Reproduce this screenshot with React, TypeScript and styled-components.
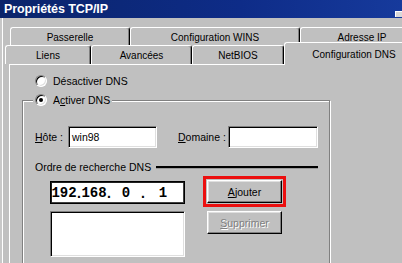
import React from "react";
import styled, { createGlobalStyle } from "styled-components";

const Global = createGlobalStyle`
  html, body { margin: 0; padding: 0; background: #c0c0c0; }
  body {
    font-family: "Liberation Sans", Arial, sans-serif;
    font-size: 10.5px;
    color: #000;
  }
`;

const Window = styled.div`
  width: 402px;
  height: 263px;
  overflow: hidden;
  background: #c0c0c0;
  display: flex;
  flex-direction: column;
`;

const TitleBar = styled.div`
  flex: none;
  height: 18px;
  background: linear-gradient(90deg, #0a246a 0%, #0e2c88 60%, #163a9c 100%);
  display: flex;
  align-items: center;
  padding-left: 4px;
  color: #fff;
  font-weight: bold;
  font-size: 12.5px;
  letter-spacing: -0.1px;
`;

const TitleText = styled.span`
  flex: 1;
`;

const CloseStub = styled.span`
  align-self: flex-end;
  width: 6px;
  height: 5px;
  margin-bottom: 1px;
  background: #d8d8d8;
  border-top: 1px solid #fff;
  border-left: 1px solid #fff;
`;

const Body = styled.div`
  flex: 1;
  display: flex;
  flex-direction: column;
  padding-top: 9px;
  box-shadow: inset 2px 0 0 #c8c8c8, inset 3px 0 0 #fff;
`;

const TabRow = styled.div<{ $indent: number; $h: number }>`
  flex: none;
  display: flex;
  align-items: flex-start;
  height: ${(p) => p.$h}px;
  padding-left: ${(p) => p.$indent}px;
`;

const Tab = styled.div<{ $w: number; $selected?: boolean; $h: number }>`
  flex: none;
  box-sizing: border-box;
  width: ${(p) => p.$w}px;
  height: ${(p) => (p.$selected ? p.$h + 4 : p.$h)}px;
  margin-top: ${(p) => (p.$selected ? -3 : 0)}px;
  padding-top: ${(p) => (p.$selected ? 1 : 1)}px;
  border-top: 1px solid #fff;
  border-left: 1px solid #fff;
  border-right: 1px solid #000;
  box-shadow: inset -1px 0 0 #808080;
  border-radius: 3px 3px 0 0;
  background: #c0c0c0;
  display: flex;
  align-items: center;
  justify-content: center;
  font-size: 10px;
  white-space: nowrap;
  position: relative;
  z-index: ${(p) => (p.$selected ? 2 : 1)};
`;

const Panel = styled.div`
  flex: 1;
  margin-left: 9px;
  border-top: 1px solid #fff;
  border-left: 1px solid #fff;
  padding: 10px 0 0 12px;
  display: flex;
  flex-direction: column;
  align-items: flex-start;
`;

const RadioRow = styled.label<{ $indent?: number }>`
  display: flex;
  align-items: center;
  height: 12px;
  margin-left: ${(p) => p.$indent ?? 0}px;
  gap: 6px;
  white-space: nowrap;
`;

const RadioCircle = styled.span<{ $checked?: boolean }>`
  flex: none;
  width: 12px;
  height: 12px;
  box-sizing: border-box;
  border-radius: 50%;
  border: 1px solid;
  border-color: #808080 #fff #fff #808080;
  box-shadow: inset 1px 1px 0 #000, inset -1px -1px 0 #dfdfdf;
  background: #fff;
  display: flex;
  align-items: center;
  justify-content: center;
  &::after {
    content: "";
    width: 4px;
    height: 4px;
    border-radius: 50%;
    background: ${(p) => (p.$checked ? "#000" : "transparent")};
  }
`;

const Group = styled.div`
  margin-top: 13px;
  width: 308px;
  min-height: 200px;
  box-sizing: border-box;
  border: 1px solid #808080;
  box-shadow: inset 1px 1px 0 #fff, 1px 1px 0 #fff;
  display: flex;
  flex-direction: column;
  align-items: flex-start;
`;

const Legend = styled.div`
  margin: -7px 0 0 10px;
  padding: 0 2px;
  background: #c0c0c0;
`;

const FieldRow = styled.div`
  margin-top: 20px;
  padding-left: 12px;
  display: flex;
  align-items: center;
  height: 22px;
`;

const FieldLabel = styled.span<{ $w: number; $gap?: number }>`
  flex: none;
  width: ${(p) => p.$w}px;
  margin-left: ${(p) => p.$gap ?? 0}px;
  white-space: nowrap;
`;

const Sunken = styled.div`
  box-sizing: border-box;
  background: #fff;
  border: 1px solid;
  border-color: #808080 #fff #fff #808080;
  box-shadow: inset 1px 1px 0 #000, inset -1px -1px 0 #dfdfdf;
`;

const TextBox = styled(Sunken)<{ $w: number }>`
  flex: none;
  width: ${(p) => p.$w}px;
  height: 22px;
  display: flex;
  align-items: center;
  padding-left: 3px;
  font-size: 10.5px;
`;

const OrderRow = styled.div`
  margin-top: 13px;
  padding-left: 12px;
  width: 295px;
  box-sizing: border-box;
  height: 12px;
  display: flex;
  align-items: center;
`;

const OrderLine = styled.span`
  flex: 1;
  margin-left: 5px;
  height: 2px;
  background: #000;
  box-shadow: 0 1px 0 #9a9a9a;
`;

const ListArea = styled.div`
  margin-top: 3px;
  padding-left: 27px;
  display: flex;
  align-items: flex-start;
  gap: 18px;
`;

const LeftCol = styled.div`
  display: flex;
  flex-direction: column;
  width: 135px;
`;

const IpBox = styled.div`
  margin-top: 5px;
  height: 23px;
  box-sizing: border-box;
  background: #fff;
  border: 1px solid #000;
  box-shadow: inset 1px 1px 0 #202020, inset -1px -1px 0 #404040;
  display: flex;
  align-items: center;
  font-family: "Liberation Mono", "Courier New", monospace;
  font-weight: bold;
  font-size: 14px;
`;

const IpField = styled.span<{ $w: number }>`
  flex: none;
  width: ${(p) => p.$w}px;
  text-align: center;
`;

const IpDot = styled.span`
  flex: none;
  width: 4px;
  display: flex;
  justify-content: center;
  font-family: "Liberation Sans", Arial, sans-serif;
`;

const ListBox = styled(Sunken)`
  margin-top: 7px;
  height: 46px;
`;

const RightCol = styled.div`
  display: flex;
  flex-direction: column;
  align-items: flex-start;
`;

const Highlight = styled.div`
  border: 3px solid #ec1010;
  padding: 1px;
`;

const Button = styled.button<{ $disabled?: boolean; $gap?: number }>`
  margin: ${(p) => p.$gap ?? 0}px 0 0 ${(p) => (p.$gap ? 4 : 0)}px;
  width: 75px;
  height: 23px;
  box-sizing: border-box;
  padding: 0;
  border: 1px solid;
  border-color: #fff #000 #000 #fff;
  box-shadow: inset -1px -1px 0 #808080, inset 1px 1px 0 #dfdfdf;
  background: #c0c0c0;
  display: flex;
  align-items: center;
  justify-content: center;
  font-family: "Liberation Sans", Arial, sans-serif;
  font-size: 10.5px;
  color: ${(p) => (p.$disabled ? "#808080" : "#000")};
  text-shadow: ${(p) => (p.$disabled ? "1px 1px 0 #fff" : "none")};
`;

const U = styled.span`
  text-decoration: underline;
`;

export default function App() {
  return (
    <>
      <Global />
      <Window>
        <TitleBar>
          <TitleText>Propriétés TCP/IP</TitleText>
          <CloseStub />
        </TitleBar>
        <Body>
          <TabRow $indent={10} $h={18}>
            <Tab $w={120} $h={18}>Passerelle</Tab>
            <Tab $w={170} $h={18}>Configuration WINS</Tab>
            <Tab $w={124} $h={18}>Adresse IP</Tab>
          </TabRow>
          <TabRow $indent={5} $h={19}>
            <Tab $w={86} $h={19}>Liens</Tab>
            <Tab $w={101} $h={19}>Avancées</Tab>
            <Tab $w={92} $h={19}>NetBIOS</Tab>
            <Tab $w={140} $h={19} $selected>
              Configuration DNS
            </Tab>
          </TabRow>
          <Panel>
            <RadioRow $indent={13}>
              <RadioCircle />
              <span>Désactiver DNS</span>
            </RadioRow>
            <Group>
              <Legend>
                <RadioRow>
                  <RadioCircle $checked />
                  <span>
                    A<U>c</U>tiver DNS
                  </span>
                </RadioRow>
              </Legend>
              <FieldRow>
                <FieldLabel $w={33}>
                  <U>H</U>ôte :
                </FieldLabel>
                <TextBox $w={89}>win98</TextBox>
                <FieldLabel $w={50} $gap={21}>
                  <U>D</U>omaine :
                </FieldLabel>
                <TextBox $w={90} />
              </FieldRow>
              <OrderRow>
                <span>Ordre de recherche DNS</span>
                <OrderLine />
              </OrderRow>
              <ListArea>
                <LeftCol>
                  <IpBox>
                    <IpField $w={26}>192</IpField>
                    <IpDot>.</IpDot>
                    <IpField $w={26}>168</IpField>
                    <IpDot>.</IpDot>
                    <IpField $w={30}>0</IpField>
                    <IpDot>.</IpDot>
                    <IpField $w={36}>1</IpField>
                  </IpBox>
                  <ListBox />
                </LeftCol>
                <RightCol>
                  <Highlight>
                    <Button>
                      <U>A</U>jouter
                    </Button>
                  </Highlight>
                  <Button $disabled $gap={4}>
                    <U>S</U>upprimer
                  </Button>
                </RightCol>
              </ListArea>
            </Group>
          </Panel>
        </Body>
      </Window>
    </>
  );
}
